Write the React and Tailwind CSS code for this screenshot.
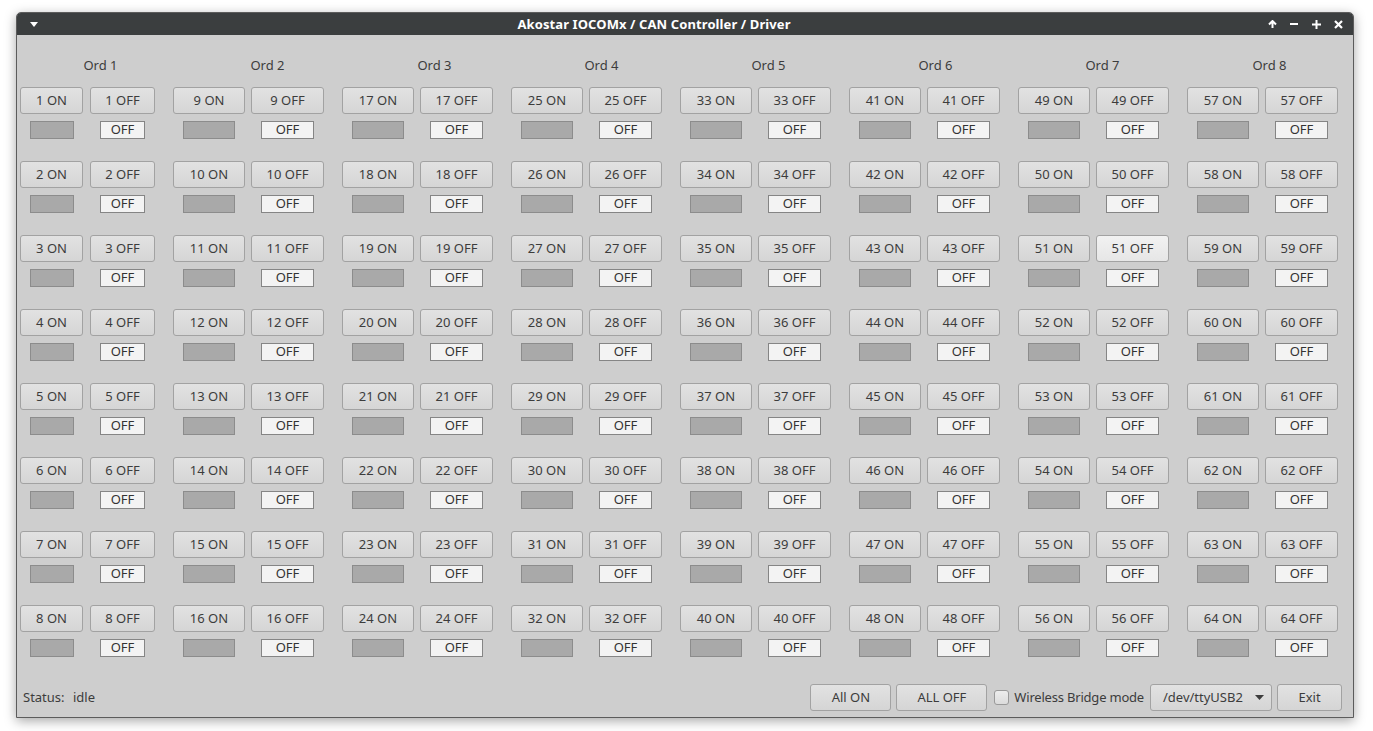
import React from "react";

const FONT = { fontFamily: '"Noto Sans", "Open Sans", sans-serif' };

function Btn({ children, className = "", hover = false }) {
  return (
    <div
      className={`flex items-center justify-center h-[27px] rounded-[3px] border border-[#a2a2a2] text-[13px] text-[#3c3c3c] ${
        hover
          ? "bg-gradient-to-b from-[#f2f2f2] to-[#e6e6e6]"
          : "bg-gradient-to-b from-[#e2e2e2] to-[#d5d5d5]"
      } ${className}`}
    >
      {children}
    </div>
  );
}

function Cell({ n, first }) {
  const onW = first ? "w-[63px]" : "w-[72px]";
  const offW = first ? "w-[65px]" : "w-[73px]";
  const indW = first ? "w-[44px]" : "w-[52px]";
  const boxW = first ? "w-[45px]" : "w-[53px]";
  return (
    <>
      <div className="flex flex-col items-center">
        <Btn className={onW}>{n} ON</Btn>
        <div className={`mt-[7px] h-[18px] ${indW} bg-[#a9a9a9] border border-[#8c8c8c]`} />
      </div>
      <div className="flex flex-col items-center">
        <Btn className={offW} hover={n === 51}>
          {n} OFF
        </Btn>
        <div
          className={`mt-[7px] h-[18px] ${boxW} bg-[#f3f3f3] border border-[#858585] flex items-center justify-center pb-[1px] text-[13px] text-[#333] leading-none`}
        >
          OFF
        </div>
      </div>
    </>
  );
}

function Group({ g }) {
  const first = g === 0;
  const nums = Array.from({ length: 8 }, (_, i) => g * 8 + i + 1);
  return (
    <div
      className={`grid gap-y-[22px] ${
        first ? "grid-cols-[63px_65px] gap-x-[7px]" : "grid-cols-[72px_73px] gap-x-[6px]"
      }`}
    >
      {nums.map((n) => (
        <Cell key={n} n={n} first={first} />
      ))}
    </div>
  );
}

export default function App() {
  const groups = Array.from({ length: 8 }, (_, i) => i);
  return (
    <div className="w-[1373px] h-[731px] bg-white overflow-hidden pt-[12px] pl-[16px]" style={FONT}>
      <div className="w-[1338px] h-[706px] flex flex-col rounded-t-[5px] border border-[#5c5c5c] bg-[#cecece] shadow-[0_3px_12px_rgba(0,0,0,0.35)] overflow-hidden">
        {/* Title bar */}
        <div className="h-[22px] bg-[#3b3e3f] flex items-center text-white shrink-0">
          <div className="w-[30px] flex justify-center pl-[3px]">
            <svg width="8" height="5" viewBox="0 0 8 5">
              <polygon points="0,0 8,0 4,5" fill="#ffffff" />
            </svg>
          </div>
          <div className="flex-1 text-center text-[13px] font-bold leading-none tracking-[0.1px]">
            Akostar IOCOMx / CAN Controller / Driver
          </div>
          <div className="w-[92px] pr-[4px] flex">
            <div className="w-[22px] flex justify-center">
              <svg width="9" height="8" viewBox="0 0 9 8">
                <path d="M4.5 8V1.5M1 4.5L4.5 1L8 4.5" stroke="#fff" strokeWidth="2" fill="none" />
              </svg>
            </div>
            <div className="w-[22px] flex justify-center">
              <svg width="8" height="8" viewBox="0 0 8 8">
                <path d="M0 4H8" stroke="#fff" strokeWidth="2" />
              </svg>
            </div>
            <div className="w-[22px] flex justify-center">
              <svg width="9" height="9" viewBox="0 0 9 9">
                <path d="M0 4.5H9M4.5 0V9" stroke="#fff" strokeWidth="2" />
              </svg>
            </div>
            <div className="w-[22px] flex justify-center">
              <svg width="9" height="9" viewBox="0 0 9 9">
                <path d="M1 1L8 8M8 1L1 8" stroke="#fff" strokeWidth="2.2" />
              </svg>
            </div>
          </div>
        </div>

        {/* Body */}
        <div className="flex-1 flex flex-col pt-[22px]">
          <div className="grid grid-cols-8 h-[17px] text-[13px] leading-[17px] text-[#3c3c3c] text-center">
            {groups.map((g) => (
              <div key={g}>Ord {g + 1}</div>
            ))}
          </div>
          <div className="mt-[13px] pl-[3px] flex gap-x-[18px]">
            {groups.map((g) => (
              <Group key={g} g={g} />
            ))}
          </div>

          {/* Bottom bar */}
          <div className="mt-auto mb-[6px] flex items-center pl-[6px] pr-[11px] text-[13px] text-[#3c3c3c]">
            <span className="w-[50px]">Status:</span>
            <span>idle</span>
            <div className="ml-auto flex items-center">
              <Btn className="w-[81px]">All ON</Btn>
              <Btn className="w-[91px] ml-[5px]">ALL OFF</Btn>
              <div className="ml-[7px] w-[15px] h-[15px] rounded-[3px] border border-[#9a9a9a] bg-gradient-to-b from-[#ededed] to-[#dcdcdc]" />
              <span className="ml-[5px] tracking-[-0.2px]">Wireless Bridge mode</span>
              <div className="ml-[6px] w-[122px] h-[27px] rounded-[3px] border border-[#a2a2a2] bg-gradient-to-b from-[#e2e2e2] to-[#d5d5d5] flex items-center pl-[12px] pr-[7px]">
                <span className="flex-1">/dev/ttyUSB2</span>
                <svg width="9" height="5" viewBox="0 0 9 5">
                  <polygon points="0,0 9,0 4.5,5" fill="#3c3c3c" />
                </svg>
              </div>
              <Btn className="w-[65px] ml-[5px]">Exit</Btn>
            </div>
          </div>
        </div>
      </div>
    </div>
  );
}
